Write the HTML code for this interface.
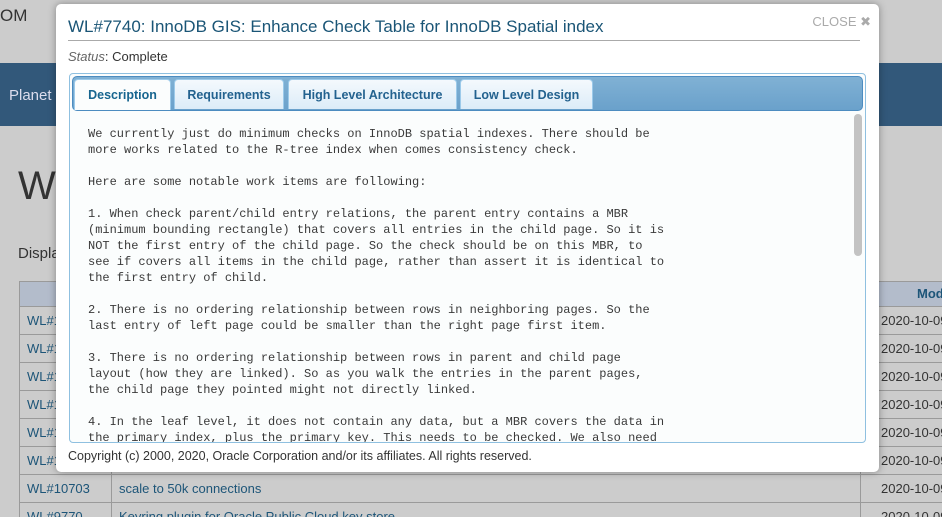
<!DOCTYPE html>
<html style="height:517px;overflow:hidden"><head><meta charset="utf-8"><style>
*{box-sizing:border-box;margin:0;padding:0}
body{width:942px;height:517px;overflow:hidden;background:#cccccc;font-family:"Liberation Sans",sans-serif;position:relative}
.abs{position:absolute}
.band{left:0;top:63px;width:942px;height:63px;background:#32587a}
.row{position:absolute;left:19px;width:930px;height:28px;border-top:1px solid #9a9a9a;font-size:13px;color:#1d5578}
.row span{position:absolute;top:6px}
.vl{position:absolute;width:1px;background:#9a9a9a}
.modal{left:56px;top:4px;width:823px;height:468px;background:#fff;border-radius:5px;box-shadow:0 0 8px rgba(0,0,0,.35)}
.title{left:12px;top:13px;font-size:17px;color:#1a5576;white-space:nowrap}
.hr{left:12px;top:36px;width:792px;height:1px;background:#aaa}
.close{right:8px;top:10px;font-size:13px;color:#aaa}
.status{left:12px;top:45px;font-size:13px;color:#333}
.panel{left:13px;top:69px;width:797px;height:370px;border:1px solid #8fc0e0;border-radius:4px;background:#fbfdfd;overflow:hidden}
.bar{left:2px;top:2px;width:791px;height:35px;border-radius:5px;background:linear-gradient(#80b1d4,#6aa1cb);border:1px solid #4d8cc0}
.tab{position:absolute;top:5px;height:30px;background:linear-gradient(#f4f9fd,#dcecf8);border:1px solid #9ccaea;border-bottom:none;border-radius:4px 4px 0 0;font-weight:bold;font-size:12.5px;color:#23628f;text-align:center;line-height:30px}
.tab.a{background:#fbfdfd;height:31px;color:#17658f}
pre{position:absolute;left:18px;top:52px;font-family:"Liberation Mono",monospace;font-size:12px;line-height:16px;color:#3a3a3a}
.sb{left:784px;top:40px;width:8px;height:142px;background:#c3c3c3;border-radius:4px}
.copy{left:12px;top:445px;font-size:12.5px;color:#333}
</style></head><body>
<div class="abs" style="left:0;top:6px;font-size:17px;color:#333">OM</div>
<div class="abs band"></div>
<div class="abs" style="left:9px;top:87px;font-size:15px;color:#dde">Planet</div>
<div class="abs" style="left:18px;top:164px;font-size:40px;color:#333">Wo</div>
<div class="abs" style="left:18px;top:245px;font-size:15px;color:#333">Displa</div>
<div class="abs" style="left:19px;top:281px;width:930px;height:25px;background:#b3bccb;border-top:1px solid #9a9a9a"></div>
<div class="abs" style="left:917px;top:286px;font-size:13px;font-weight:bold;color:#1d5578">Mod</div>
<div class="row" style="top:306px"><span style="left:8px">WL#1</span><span style="left:862px;color:#333">2020-10-09</span></div>
<div class="row" style="top:334px"><span style="left:8px">WL#1</span><span style="left:862px;color:#333">2020-10-09</span></div>
<div class="row" style="top:362px"><span style="left:8px">WL#1</span><span style="left:862px;color:#333">2020-10-09</span></div>
<div class="row" style="top:390px"><span style="left:8px">WL#1</span><span style="left:862px;color:#333">2020-10-09</span></div>
<div class="row" style="top:418px"><span style="left:8px">WL#1</span><span style="left:862px;color:#333">2020-10-09</span></div>
<div class="row" style="top:446px"><span style="left:8px">WL#1</span><span style="left:862px;color:#333">2020-10-09</span></div>
<div class="row" style="top:474px"><span style="left:8px">WL#10703</span><span style="left:100px">scale to 50k connections</span><span style="left:862px;color:#333">2020-10-09</span></div>
<div class="row" style="top:502px;height:15px;overflow:hidden"><span style="left:8px">WL#9770</span><span style="left:100px">Keyring plugin for Oracle Public Cloud key store</span><span style="left:862px;color:#333">2020-10-09</span></div>
<div class="vl" style="left:19px;top:281px;height:236px"></div>
<div class="vl" style="left:111px;top:306px;height:211px"></div>
<div class="vl" style="left:860px;top:281px;height:236px"></div>

<div class="abs modal">
<div class="abs title">WL#7740: InnoDB GIS: Enhance Check Table for InnoDB Spatial index</div>
<div class="abs close">CLOSE ✖</div>
<div class="abs hr"></div>
<div class="abs status"><i style="color:#666">Status</i>: Complete</div>
<div class="abs panel">
<div class="abs bar"></div>
<div class="tab a" style="left:4px;width:97px">Description</div>
<div class="tab" style="left:104px;width:110px">Requirements</div>
<div class="tab" style="left:218px;width:169px">High Level Architecture</div>
<div class="tab" style="left:390px;width:133px">Low Level Design</div>
<pre>We currently just do minimum checks on InnoDB spatial indexes. There should be
more works related to the R-tree index when comes consistency check.

Here are some notable work items are following:

1. When check parent/child entry relations, the parent entry contains a MBR
(minimum bounding rectangle) that covers all entries in the child page. So it is
NOT the first entry of the child page. So the check should be on this MBR, to
see if covers all items in the child page, rather than assert it is identical to
the first entry of child.

2. There is no ordering relationship between rows in neighboring pages. So the
last entry of left page could be smaller than the right page first item.

3. There is no ordering relationship between rows in parent and child page
layout (how they are linked). So as you walk the entries in the parent pages,
the child page they pointed might not directly linked.

4. In the leaf level, it does not contain any data, but a MBR covers the data in
the primary index, plus the primary key. This needs to be checked. We also need</pre>
<div class="abs sb"></div>
</div>
<div class="abs copy">Copyright (c) 2000, 2020, Oracle Corporation and/or its affiliates. All rights reserved.</div>
</div>
</body></html>
